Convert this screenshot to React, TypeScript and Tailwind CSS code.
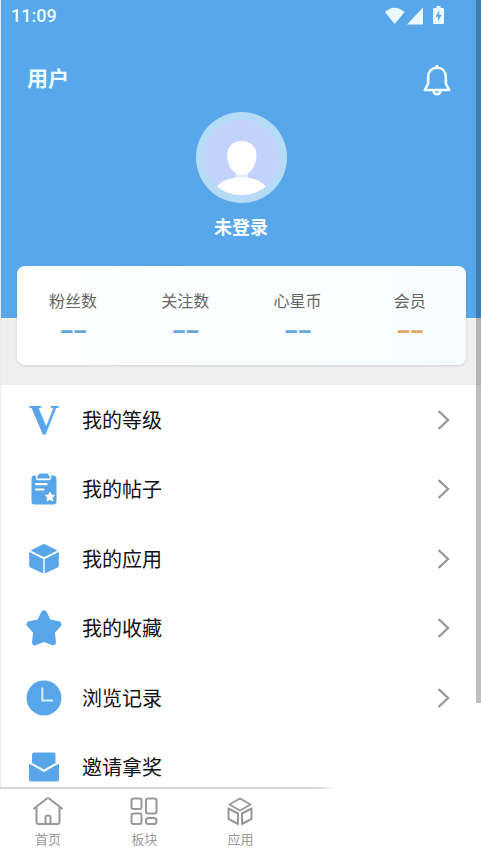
import type { ReactNode } from "react";

interface Stat {
  label: string;
  value: string;
  accent?: boolean;
}

interface MenuItem {
  label: string;
  icon: ReactNode;
  hideArrow?: boolean;
}

const stats: Stat[] = [
  { label: "粉丝数", value: "––" },
  { label: "关注数", value: "––" },
  { label: "心星币", value: "––" },
  { label: "会员", value: "––", accent: true },
];

const menuItems: MenuItem[] = [
  { label: "我的等级", icon: <LevelIcon /> },
  { label: "我的帖子", icon: <PostsIcon /> },
  { label: "我的应用", icon: <CubeIcon /> },
  { label: "我的收藏", icon: <StarIcon /> },
  { label: "浏览记录", icon: <ClockIcon /> },
  { label: "邀请拿奖", icon: <MailIcon />, hideArrow: true },
];

const tabs: MenuItem[] = [
  { label: "首页", icon: <HomeTabIcon /> },
  { label: "板块", icon: <BoardTabIcon /> },
  { label: "应用", icon: <AppsTabIcon /> },
];

function LevelIcon() {
  return (
    <span
      aria-hidden="true"
      className="w-9 text-center font-['Liberation_Serif',serif] text-[42px] leading-9 font-bold text-[#58a6e9]"
    >
      V
    </span>
  );
}

function PostsIcon() {
  return (
    <svg viewBox="0 0 36 36" className="size-9" aria-hidden="true">
      <path
        fill="#58a6e9"
        d="M8.500 4.500H9.800V6.500Q9.800 9.300 12.600 9.300H22.400Q25.200 9.300 25.200 6.500V4.500H27Q30.500 4.500 30.500 8V30Q30.500 33.500 27 33.500H8.500Q5.500 33.500 5.500 30V8Q5.500 4.500 8.500 4.500Z"
      />
      <path
        fill="#58a6e9"
        d="M14 2.500H21Q22.500 2.500 22.500 4.300H22.500Q23.700 4.300 23.700 5.500V7.500H11.300V5.500Q11.300 4.300 12.500 4.300 12.500 2.500 14 2.500Z"
      />
      <path d="M10 13.200H20.500M10 18.500H17.500" stroke="#fff" strokeWidth="2.200" strokeLinecap="round" />
      <path
        fill="#fff"
        stroke="#fff"
        strokeWidth="0.800"
        strokeLinejoin="round"
        d="m24 21 1.400 2.900 3.200.5-2.300 2.300.5 3.200-2.900-1.500-2.900 1.500.5-3.200-2.300-2.300 3.200-.5Z"
      />
    </svg>
  );
}

function CubeIcon() {
  return (
    <svg viewBox="0 0 36 36" className="size-9" fill="#58a6e9" aria-hidden="true">
      <path d="M17 3.300Q18 2.900 19 3.300L31.500 9.500 18 16.300 4.500 9.500Z" />
      <path d="M3.200 11 17.300 18V32.500L4.500 26.400Q3.200 25.700 3.200 24.500Z" />
      <path d="M32.800 11 18.700 18V32.500L31.500 26.400Q32.800 25.700 32.800 24.500Z" />
    </svg>
  );
}

function StarIcon() {
  return (
    <svg viewBox="0 0 36 36" className="size-9" aria-hidden="true">
      <path
        d="M18 3.300 22.400 12.300 32.500 14.200 25.800 21.800 27 32.300 18 28.800 9 32.300 10.200 21.800 3.500 14.200 13.600 12.300Z"
        fill="#58a6e9"
        stroke="#58a6e9"
        strokeWidth="6"
        strokeLinejoin="round"
      />
    </svg>
  );
}

function ClockIcon() {
  return (
    <svg viewBox="0 0 36 36" className="size-9" aria-hidden="true">
      <circle cx="18" cy="18" r="17.500" fill="#58a6e9" />
      <path d="M16.300 7.500V20.500H27" fill="none" stroke="#d4f0fc" strokeWidth="2" />
    </svg>
  );
}

function MailIcon() {
  return (
    <svg viewBox="0 0 36 36" className="size-9" fill="#58a6e9" aria-hidden="true">
      <path d="M8.500 3.500H27Q29.500 3.500 29.500 6V14L18 20.600 6 14V6Q6 3.500 8.500 3.500Z" />
      <path d="M3 14.500 18 23 33 14.500V30Q33 32.500 30.500 32.500H5.500Q3 32.500 3 30Z" />
    </svg>
  );
}

function HomeTabIcon() {
  return (
    <svg viewBox="0 0 30 30" className="size-[30px]" fill="none" stroke="#989898" strokeWidth="2" strokeLinejoin="round" strokeLinecap="round" aria-hidden="true">
      <path d="M1 12.500 14 2.500Q15 1.800 16 2.500L29 12.500" />
      <path d="M3.500 11.500V26Q3.500 28 5.500 28H24.500Q26.500 28 26.500 26V11.500" />
      <path d="M12.500 28V21.500Q12.500 19.500 15 19.500T17.500 21.500V28" />
    </svg>
  );
}

function BoardTabIcon() {
  return (
    <svg viewBox="0 0 30 30" className="size-[30px]" fill="none" stroke="#989898" strokeWidth="2" aria-hidden="true">
      <rect x="2.500" y="2.500" width="10" height="10.500" rx="2" />
      <rect x="17" y="2.500" width="10.500" height="15" rx="2" />
      <rect x="2.500" y="17.500" width="10" height="10.500" rx="2" />
      <rect x="17" y="22" width="10.500" height="6" rx="2.500" />
    </svg>
  );
}

function AppsTabIcon() {
  return (
    <svg viewBox="0 0 30 30" className="size-[30px]" fill="none" stroke="#989898" strokeWidth="2" strokeLinejoin="round" aria-hidden="true">
      <path d="M15 2.500 25.500 8.500 15 14.500 4.500 8.500Z" />
      <path d="M3.500 12.500 13 17.500V28L3.500 23Z" />
      <path d="M26.500 12.500 17 17.500V28L26.500 23Z" />
    </svg>
  );
}

function StatusBar() {
  return (
    <div className="flex h-8 items-center justify-between pr-[33px] pl-[10px] text-[#e9fbff]">
      <span className="font-[Roboto,sans-serif] text-lg leading-6 font-medium">11:09</span>
      <svg viewBox="0 0 64 24" className="h-6 w-16" fill="currentColor" aria-hidden="true">
        <path d="M1 8Q10.500-.500 20.500 8L10.700 20Z" />
        <path d="M39 3.500V20.500H23Z" />
        <path d="M52.500 2H56.500V4H59Q60 4 60 5V19Q60 20 59 20H50Q49 20 49 19V5Q49 4 50 4H52.500Z" />
        <path fill="#58a6e9" d="M55.200 6.500 51.500 12.700H54V17L57.500 11H55.200Z" />
      </svg>
    </div>
  );
}

function ProfileHeader() {
  return (
    <header className="h-[318px] bg-[#58a7eb]">
      <StatusBar />
      <div className="flex h-20 items-center justify-between pt-[10px] pr-[30px] pl-[26px]">
        <h1 className="text-[21px] leading-6 font-bold text-[#e9fbff]">用户</h1>
        <button type="button" aria-label="通知" className="text-[#effcff]">
          <svg viewBox="0 0 28 38" className="h-[38px] w-7" fill="none" stroke="currentColor" strokeWidth="2.600" strokeLinejoin="round" aria-hidden="true">
            <path d="M14 7V10" />
            <path d="M14 9.800C8.500 9.800 5.200 13.500 5.200 19V25.500L1.800 32H26.200L22.800 25.500V19C22.800 13.500 19.500 9.800 14 9.800Z" />
            <path d="M10.500 33Q10.800 36.300 14 36.300T17.500 33" />
          </svg>
        </button>
      </div>
      <div className="flex flex-col items-center">
        <svg viewBox="0 0 91 91" className="size-[91px]" aria-hidden="true">
          <circle cx="45.500" cy="45.500" r="45.500" fill="#b5dbf6" />
          <circle cx="45.500" cy="45.500" r="38" fill="#c2d2fb" />
          <path fill="#e6edfd" d="M39.500 58H52V65L56 68H35L39.500 65Z" />
          <path fill="#fff" d="M21 74.500C27 68 35 65.500 45.500 65.500S64 68 70 74.500Q60 83 45.500 83T21 74.500Z" />
          <path fill="#fff" d="M45.800 29C36.500 29 31.200 35 31.200 43.500C31.200 54 38 63 45.800 63S60.400 54 60.400 43.500C60.400 35 55 29 45.800 29Z" />
        </svg>
        <p className="mt-[11px] text-lg leading-6 font-bold text-white">未登录</p>
      </div>
    </header>
  );
}

function StatsCard() {
  return (
    <section className="h-[67px] bg-[#efefef] pr-[15px] pl-4">
      <dl className="relative -top-[52px] grid h-[99px] grid-cols-4 rounded-lg bg-linear-to-r from-white to-[#f7fdff] pt-[22px] text-center shadow-sm">
        {stats.map((stat) => (
          <div key={stat.label}>
            <dt className="text-base leading-6 text-[#666]">{stat.label}</dt>
            <dd
              className={`mt-2 font-[Roboto,sans-serif] text-[22px] leading-6 font-black ${
                stat.accent ? "text-[#e4a662]" : "text-[#65a8dc]"
              }`}
            >
              {stat.value}
            </dd>
          </div>
        ))}
      </dl>
    </section>
  );
}

function MenuList() {
  return (
    <ul className="grid h-[417px] auto-rows-fr">
      {menuItems.map((item) => (
        <li key={item.label}>
          <button type="button" className="flex size-full items-center gap-5 pr-[27px] pl-[25px] text-left">
            {item.icon}
            <span className="flex-1 text-xl leading-7 text-[#111]">{item.label}</span>
            {item.hideArrow ? null : (
              <svg viewBox="0 0 20 20" className="size-5" fill="none" stroke="#999" strokeWidth="2.400" aria-hidden="true">
                <path d="M4.500 1 14 10 4.500 19" />
              </svg>
            )}
          </button>
        </li>
      ))}
    </ul>
  );
}

function TabBar() {
  return (
    <nav className="shrink-0 bg-white">
      <div className="h-[2px] w-[70%] bg-linear-to-r from-[#d6d6d6] from-94% to-transparent" />
      <div className="grid h-[66px] grid-cols-5 pt-[7px]">
        {tabs.map((tab) => (
          <button key={tab.label} type="button" className="flex flex-col items-center gap-[3px]">
            {tab.icon}
            <span className="text-[13px] leading-5 text-[#999]">{tab.label}</span>
          </button>
        ))}
      </div>
    </nav>
  );
}

export default function App() {
  return (
    <div className="relative flex h-screen flex-col overflow-hidden bg-white font-['Noto_Sans_CJK_SC',sans-serif]">
      <main className="min-h-0 flex-1 overflow-hidden border-l border-[#e6eef3]">
        <ProfileHeader />
        <StatsCard />
        <MenuList />
      </main>
      <TabBar />
      <div className="absolute top-0 right-0 h-[703px] w-[5px] bg-black/25" />
    </div>
  );
}
